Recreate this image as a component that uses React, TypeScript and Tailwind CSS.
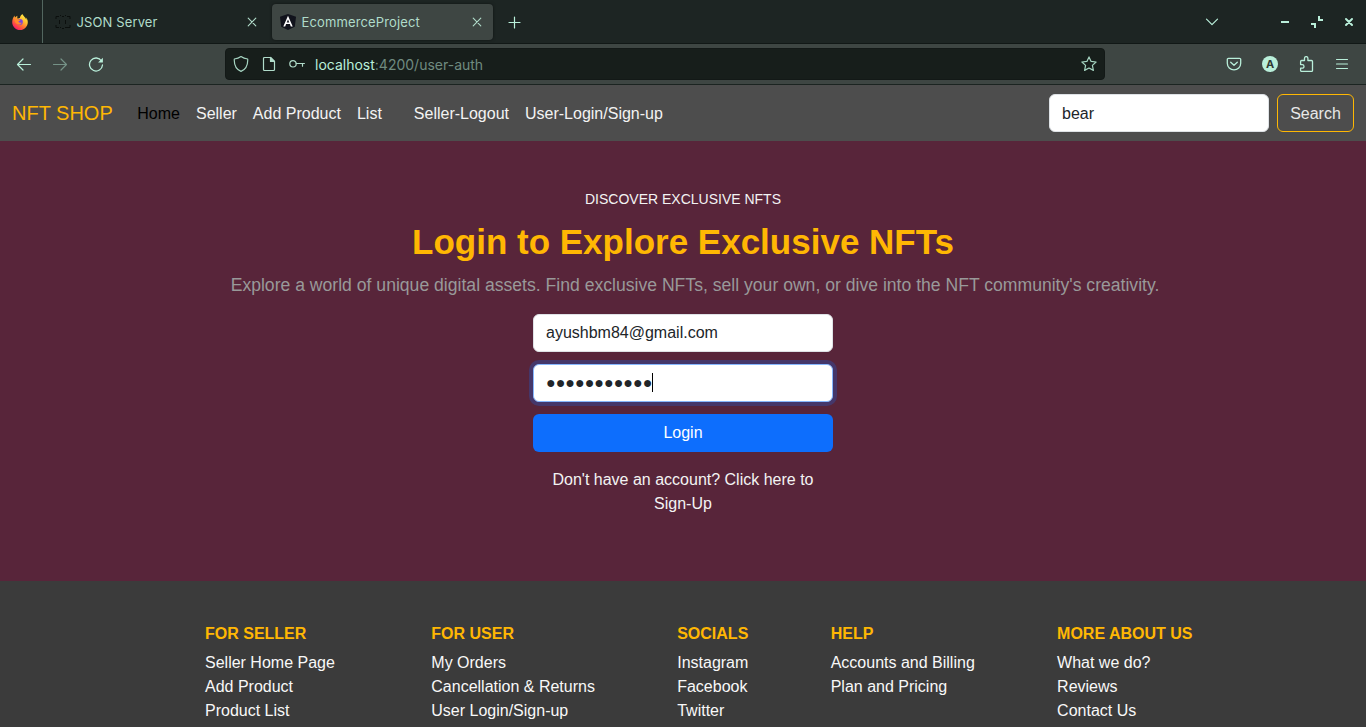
import React from "react";

const columns = [
  { title: "FOR SELLER", items: ["Seller Home Page", "Add Product", "Product List"] },
  { title: "FOR USER", items: ["My Orders", "Cancellation & Returns", "User Login/Sign-up"] },
  { title: "SOCIALS", items: ["Instagram", "Facebook", "Twitter"] },
  { title: "HELP", items: ["Accounts and Billing", "Plan and Pricing"] },
  { title: "MORE ABOUT US", items: ["What we do?", "Reviews", "Contact Us"] },
];

function Icon({ children, className = "", w = 1.2 }: { children: React.ReactNode; className?: string; w?: number }) {
  return (
    <svg
      viewBox="0 0 16 16"
      className={`size-4 shrink-0 ${className}`}
      fill="none"
      stroke="currentColor"
      strokeWidth={w}
      strokeLinecap="round"
      strokeLinejoin="round"
    >
      {children}
    </svg>
  );
}

function FirefoxLogo() {
  return (
    <svg viewBox="0 0 16 16" className="size-4 shrink-0">
      <defs>
        <linearGradient id="fox" x1="0.85" y1="0.05" x2="0.2" y2="0.95">
          <stop offset="0" stopColor="#fff14a" />
          <stop offset="0.35" stopColor="#ffbd2f" />
          <stop offset="0.65" stopColor="#ff6a33" />
          <stop offset="1" stopColor="#f5156c" />
        </linearGradient>
      </defs>
      <path
        d="M15.3 5.6c-.4-.9-1.1-1.8-1.7-2.1.5.9.8 1.8.9 2.4C13.6 3.6 12 2.7 10.8.7c-.1-.2-.2-.4-.3-.7C8.6 1.1 8 3 7.9 4.1c-.8 0-1.6.3-2.2.7C5.2 3.9 5.1 2.7 5.5 1.8 4.5 2.2 3.7 2.9 3.1 3.6c-.4-.5-.4-1.5-.3-2.2C1.3 2.7.2 5.3.2 8.2c0 4.3 3.5 7.8 7.8 7.8s7.8-3.5 7.8-7.8c0-.9-.2-1.8-.5-2.6z"
        fill="url(#fox)"
      />
      <circle cx="8" cy="7.9" r="2.8" fill="#7542e5" />
      <path d="M2.500 5.200c1.500-.8 3-.5 3.800.2.900 0 2 .1 2.200.6-.2.700-1.900.9-2.100 1.600.4 1.300 2 1.400 3.300.8-.4 1.800-2.400 2.500-4 1.900C3.700 9.600 2.500 7.600 2.500 5.200z" fill="#ff8a2c" />
    </svg>
  );
}

function TabBar() {
  return (
    <div className="flex h-[44px] border-b border-[#111816] bg-[#1d2523] text-[13px] text-[#b0dcca]">
      <div className="flex w-[43px] items-center border-r border-[#52665f] pl-3">
        <FirefoxLogo />
      </div>
      <div className="flex w-[225px] items-center pl-3">
        <svg viewBox="0 0 16 16" className="size-4 shrink-0" fill="none" stroke="#0b0f0d" strokeWidth="1">
          <path d="M1 5V2.500h3M5 1.500h1M7 2.500h2M10 1.500h1M12 2.500h3V5M1 11v2.500h3M5 13.500h1M7 14.500h2M10 13.500h5V11M4.500 6v4M10.500 6v4" />
        </svg>
        <span className="ml-[5.5px] grow pt-px tracking-[0.12px]">JSON Server</span>
        <Icon className="mr-2" w={1.1}><path d="M4.200 4.200l7.600 7.600M11.800 4.200l-7.600 7.600" /></Icon>
      </div>
      <div className="ml-1 mt-1 flex h-9 w-[221px] items-center rounded bg-[#3e4643] pl-2 shadow-[0_0_3px_rgba(0,0,0,0.5)]">
        <svg viewBox="0 0 16 16" className="size-4 shrink-0">
          <path d="M8 0l8 2.700-1.200 10L8 16l-6.800-3.300L0 2.700z" fill="#11131c" />
          <path d="M8 1.800L3.300 12.400h1.900l.9-2.300h3.800l.9 2.300h1.900zm0 3.800l1.300 3H6.700z" fill="#fff" />
        </svg>
        <span className="ml-[5.5px] grow tracking-[0.14px]">EcommerceProject</span>
        <Icon className="mr-2" w={1.1}><path d="M4.200 4.200l7.600 7.600M11.800 4.200l-7.600 7.600" /></Icon>
      </div>
      <div className="flex grow items-center pl-[14px] text-[#b9efda]">
        <Icon w={1.2}><path d="M7.500 3v11M2 8.500h11" /></Icon>
        <div className="grow" />
        <Icon className="mr-[57px]" w={1.2}><path d="M2.500 5.200L8 10.700l5.500-5.500" /></Icon>
        <Icon className="mr-4"><path d="M4 7h8v2H4z" fill="currentColor" stroke="none" /></Icon>
        <Icon className="mr-4"><path d="M9 2h2v3h3v2H9zM2 9h5v5H5v-3H2z" fill="currentColor" stroke="none" /></Icon>
        <Icon className="mr-[9px]" w={2}><path d="M5 5l6 6M11 5l-6 6" /></Icon>
      </div>
    </div>
  );
}

function AddressBar() {
  return (
    <div className="flex h-[41px] items-center border-b border-[#1b2421] bg-[#3e4643] text-[#b9efda]">
      <Icon className="ml-4" w={1.2}><path d="M14.500 8.500h-13M7 3L1.500 8.500 7 14" /></Icon>
      <Icon className="ml-5 opacity-45" w={1.2}><path d="M1.500 8.500h13M9 3L14.500 8.500 9 14" /></Icon>
      <Icon className="ml-5" w={1.3}>
        <path d="M13.500 5A6.500 6.500 0 1 0 14.500 9" />
        <path d="M14.900 1.800v4.800h-4.800z" fill="currentColor" stroke="none" />
      </Icon>
      <div className="ml-[121px] flex h-8 w-[880px] items-center rounded border border-[#131917] bg-[#171e1b] px-[7px] text-sm">
        <Icon className="text-[#a5d4c1]"><path d="M8 .6c2 1.500 4.500 2.200 6.700 2.400.3 5.600-1.300 10-6.700 12.400C2.600 13 1 8.600 1.300 3 3.500 2.800 6 2.100 8 .6z" /></Icon>
        <Icon className="ml-3 text-[#b0dcca]">
          <path d="M3.500 1.500h6l4 4v8a1 1 0 0 1-1 1h-9a1 1 0 0 1-1-1v-11a1 1 0 0 1 1-1z" />
          <path d="M9.500 1.500v4h4z" fill="currentColor" />
        </Icon>
        <Icon className="ml-3 text-[#b0dcca]"><circle cx="4" cy="7.8" r="3.2" /><path d="M7.200 7.500h8.200M13.500 7.500v2.700" /></Icon>
        <span className="ml-[10px] grow pt-[2px] text-[#6f8b80]">
          <span className="text-[#b9efda]">localhost</span>:4200/user-auth
        </span>
        <Icon className="text-[#a5d4c1]"><path d="M8 .9l2.100 4.500 5 .6-3.700 3.400 1 5L8 12l-4.400 2.400 1-5L.9 6l5-.6z" /></Icon>
      </div>
      <div className="flex grow items-center justify-end gap-5 pr-4">
        <Icon w={1.3}><path d="M2.500 2.300h11a1.200 1.200 0 0 1 1.200 1.200v3.700a6.700 6.700 0 0 1-13.400 0V3.500a1.200 1.200 0 0 1 1.200-1.200zM4.700 6.300L8 9.300l3.300-3" /></Icon>
        <div className="flex size-4 items-center justify-center rounded-full bg-[#b9efda] text-[11px] font-bold text-[#303a35]">A</div>
        <Icon w={1.3}><path d="M6.500 4.500V2.300a1.700 1.700 0 0 1 3.400 0v2.200h3.600a1 1 0 0 1 1 1v8.900a1 1 0 0 1-1 1H3.600a1 1 0 0 1-1-1v-2.200h1.600a1.800 1.800 0 0 0 0-3.600H2.600V5.500a1 1 0 0 1 1-1z" /></Icon>
        <Icon w={1.1}><path d="M2.500 3.500h11M2.500 8h11M2.500 12.500h11" /></Icon>
      </div>
    </div>
  );
}

export default function App() {
  return (
    <div className="flex h-[727px] w-[1366px] flex-col overflow-hidden font-['Liberation_Sans',sans-serif] text-base leading-6">
      <div className="font-[Inter,sans-serif]">
        <TabBar />
        <AddressBar />
      </div>
      <nav className="flex h-14 shrink-0 items-center bg-[#4d4d4d] px-3 text-[#f3f3f3]">
        <a className="mr-[24.5px] text-xl text-[#ffb703]">NFT SHOP</a>
        <div className="flex grow gap-4 pt-[2px]">
          <a className="text-black">Home</a>
          <a>Seller</a>
          <a>Add Product</a>
          <a className="mr-4">List</a>
          <a>Seller-Logout</a>
          <a>User-Login/Sign-up</a>
        </div>
        <input defaultValue="bear" className="mr-2 h-[38px] w-[220px] rounded-md border border-[#dee2e6] bg-white px-3 pt-[2px] text-[#212529]" />
        <button className="h-[38px] w-[77px] rounded-md border border-[#ffb703] pt-[2px] text-[#e8e8e8]">Search</button>
      </nav>
      <main className="flex h-[440px] shrink-0 flex-col items-center bg-[#58253a] pt-12 text-[#f3f3f3]">
        <div className="text-sm leading-[21px]">DISCOVER EXCLUSIVE NFTS</div>
        <h1 className="mt-[11px] text-[35px] leading-[42px] font-bold text-[#ffb703]">Login to Explore Exclusive NFTs</h1>
        <p className="mt-[9px] ml-6 text-[17.6px] leading-[26px] text-[#999]">
          Explore a world of unique digital assets. Find exclusive NFTs, sell your own, or dive into the NFT community's creativity.
        </p>
        <form className="mt-4 flex w-[300px] flex-col">
          <input defaultValue="ayushbm84@gmail.com" className="h-[38px] rounded-md border border-[#dee2e6] bg-white px-3 text-[#212529]" />
          <div className="mt-3 flex h-[38px] items-center rounded-md border border-[#86b7fe] bg-white px-3 text-[#212529] shadow-[0_0_0_4px_rgba(13,110,253,0.25)]">
            <span>●●●●●●●●●●●</span>
            <span className="mb-px h-[19px] w-px bg-black" />
          </div>
          <button type="button" className="mt-3 h-[38px] rounded-md bg-[#0d6efd] text-white">Login</button>
          <p className="mt-4 px-3 text-center">Don't have an account? Click here to Sign-Up</p>
        </form>
      </main>
      <footer className="grid grow grid-cols-[226.3px_245.9px_153.5px_226.4px_1fr] bg-[#3b3b3b] pt-[41px] pl-[205px] text-[#f8f8f8]">
        {columns.map((c) => (
          <div key={c.title}>
            <h2 className="mb-[5px] font-bold text-[#ffb703]">{c.title}</h2>
            {c.items.map((item) => (
              <div key={item}>{item}</div>
            ))}
          </div>
        ))}
      </footer>
    </div>
  );
}
